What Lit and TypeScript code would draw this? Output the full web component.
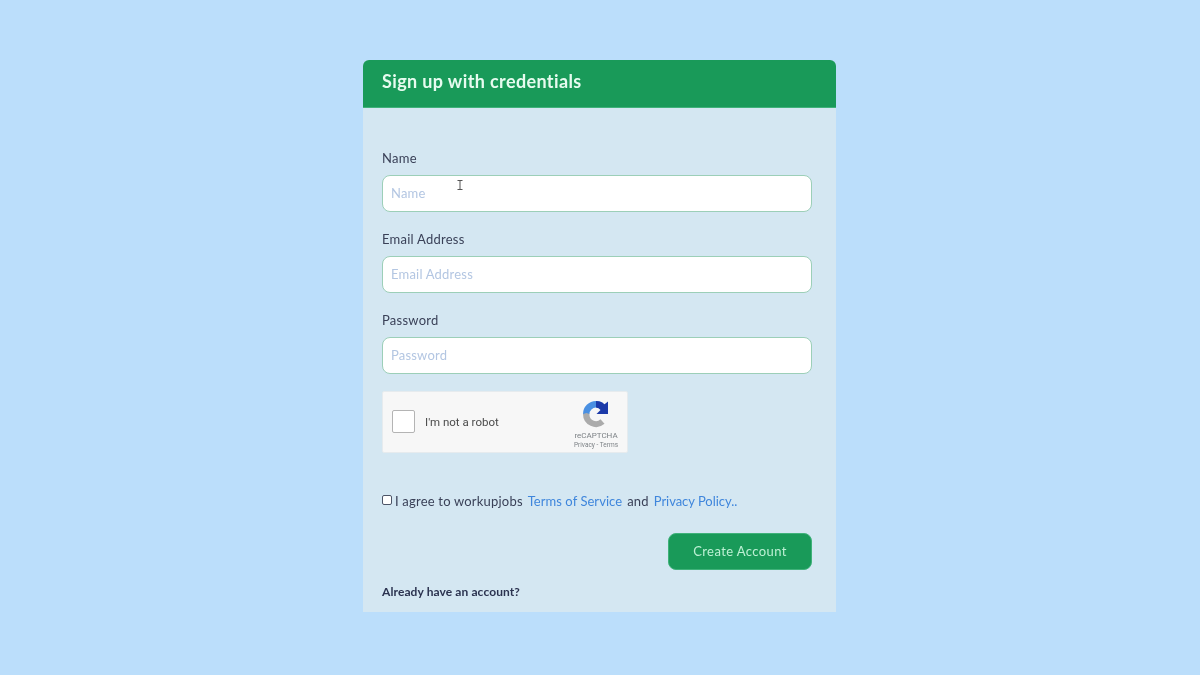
import { LitElement, html, css } from "lit";
import { customElement } from "lit/decorators.js";

@customElement("app-root")
export class AppRoot extends LitElement {
  static styles = css`
    :host {
      display: flex;
      justify-content: center;
      align-items: flex-start;
      box-sizing: border-box;
      width: 100%;
      height: 675px;
      padding: 60px 1px 0 0;
      background: #bbdefb;
      font-family: "Lato", "Liberation Sans", sans-serif;
      color: #2b3350;
    }
    .card {
      width: 473px;
      height: 552px;
      background: #d4e7f2;
      border-radius: 6px 6px 0 0;
      display: flex;
      flex-direction: column;
      filter: blur(0.45px);
    }
    .head {
      height: 48px;
      flex: none;
      box-sizing: border-box;
      background: #199a59;
      border-radius: 6px 6px 0 0;
      border-bottom: 1px solid #3fb27a;
      padding: 0 19px 6px;
      display: flex;
      align-items: center;
      color: #e6fbef;
      font-size: 18px;
      font-weight: 700;
      letter-spacing: 0.38px;
    }
    .body {
      flex: 1;
      display: flex;
      flex-direction: column;
      padding: 0 24px 0 19px;
    }
    .field {
      display: flex;
      flex-direction: column;
      height: 81px;
    }
    .fields { padding-top: 40px; }
    .field label {
      height: 27px;
      line-height: 20px;
      font-size: 13px;
      letter-spacing: 0.25px;
      color: #3a4158;
    }
    .input-wrap { position: relative; }
    .field input {
      display: block;
      box-sizing: border-box;
      width: 100%;
      height: 37px;
      padding: 0 8px 2px;
      border: 1px solid #9ccfb8;
      border-radius: 8px;
      background: #fff;
      font: 13px "Lato", "Liberation Sans", sans-serif;
      letter-spacing: 0.2px;
      outline: none;
    }
    .field input::placeholder { color: #b3c6e2; opacity: 1; }
    .cursor {
      position: absolute;
      left: 75px;
      top: 5px;
      width: 6px;
      height: 10px;
    }
    .captcha {
      box-sizing: border-box;
      width: 246px;
      height: 62px;
      background: #f7f7f7;
      border: 1px solid #e6ebee;
      border-radius: 2px;
      display: flex;
      align-items: center;
      padding: 0 8px 0 9px;
    }
    .box {
      width: 23px;
      height: 23px;
      box-sizing: border-box;
      flex: none;
      margin-bottom: 2px;
      background: #fff;
      border: 1.5px solid #b4b4b4;
      border-radius: 2px;
    }
    .robot {
      flex: 1;
      margin-left: 10px;
      font: 11.5px "Roboto", "Liberation Sans", sans-serif;
      color: #4a4a4a;
    }
    .brand {
      width: 46px;
      display: flex;
      flex-direction: column;
      align-items: center;
      color: #7d8286;
      font-family: "Roboto", "Liberation Sans", sans-serif;
    }
    .brand svg { width: 28px; height: 28px; display: block; margin-top: 4px; }
    .brand .name { font-size: 8px; line-height: 10px; margin-top: 3px; white-space: nowrap; }
    .brand .links { font-size: 6.5px; line-height: 8px; white-space: nowrap; }
    .agree {
      display: flex;
      align-items: center;
      height: 20px;
      margin-top: 38px;
      font-size: 13px;
      letter-spacing: 0.2px;
      color: #3a4158;
      white-space: nowrap;
    }
    .agree .cb {
      width: 10px;
      height: 10px;
      box-sizing: border-box;
      background: #fff;
      border: 1px solid #4c5568;
      border-radius: 2px;
      margin-right: 3px;
      margin-bottom: 3px;
      flex: none;
    }
    .agree a { color: #3f86dc; text-decoration: none; margin: 0 5px; letter-spacing: 0.05px; }
    .agree a.last { margin-right: 0; letter-spacing: -0.04px; }
    .actions {
      display: flex;
      justify-content: flex-end;
      margin-top: 22px;
    }
    .actions button {
      width: 144px;
      height: 37px;
      border: 1px solid #3fb27a;
      border-radius: 8px;
      background: #199a59;
      color: #bdf0d4;
      font: 13px "Lato", "Liberation Sans", sans-serif;
      letter-spacing: 0.4px;
      padding: 0 0 2px;
    }
    .already {
      margin-top: 12px;
      line-height: 20px;
      font-size: 12px;
      font-weight: 700;
      color: #2b3350;
      letter-spacing: 0.1px;
    }
  `;

  render() {
    return html`
      <div class="card">
        <div class="head">Sign up with credentials</div>
        <div class="body">
          <div class="fields">
            <div class="field">
              <label>Name</label>
              <div class="input-wrap">
                <input placeholder="Name" />
                <svg class="cursor" viewBox="0 0 6 10" fill="none" stroke="#555" stroke-width="1">
                  <path d="M.5 .5h5M3 .5v9M.5 9.5h5" />
                </svg>
              </div>
            </div>
            <div class="field">
              <label>Email Address</label>
              <div class="input-wrap"><input placeholder="Email Address" /></div>
            </div>
            <div class="field">
              <label>Password</label>
              <div class="input-wrap"><input placeholder="Password" /></div>
            </div>
          </div>
          <div class="captcha">
            <div class="box"></div>
            <div class="robot">I'm not a robot</div>
            <div class="brand">
              <svg viewBox="0 0 28 28">
                <path d="M14 1a13 13 0 0 0-13 13h6.500A6.500 6.500 0 0 1 14 7.500l5 .5 2-5A13 13 0 0 0 14 1z" fill="#4a90e2" />
                <path d="M14 1a13 13 0 0 1 8.500 3.200L26 1.500V14H14.500l4-4A6.500 6.500 0 0 0 14 7.500z" fill="#1c3aa9" />
                <path d="M1 14a13 13 0 0 0 21.500 9.800l-4-4.600A6.500 6.500 0 0 1 7.500 14l-3-1z" fill="#ababab" />
              </svg>
              <div class="name">reCAPTCHA</div>
              <div class="links">Privacy - Terms</div>
            </div>
          </div>
          <div class="agree">
            <span class="cb"></span>
            <span>I agree to workupjobs</span>
            <a>Terms of Service</a>
            <span>and</span>
            <a class="last">Privacy Policy..</a>
          </div>
          <div class="actions"><button>Create Account</button></div>
          <div class="already">Already have an account?</div>
        </div>
      </div>
    `;
  }
}
